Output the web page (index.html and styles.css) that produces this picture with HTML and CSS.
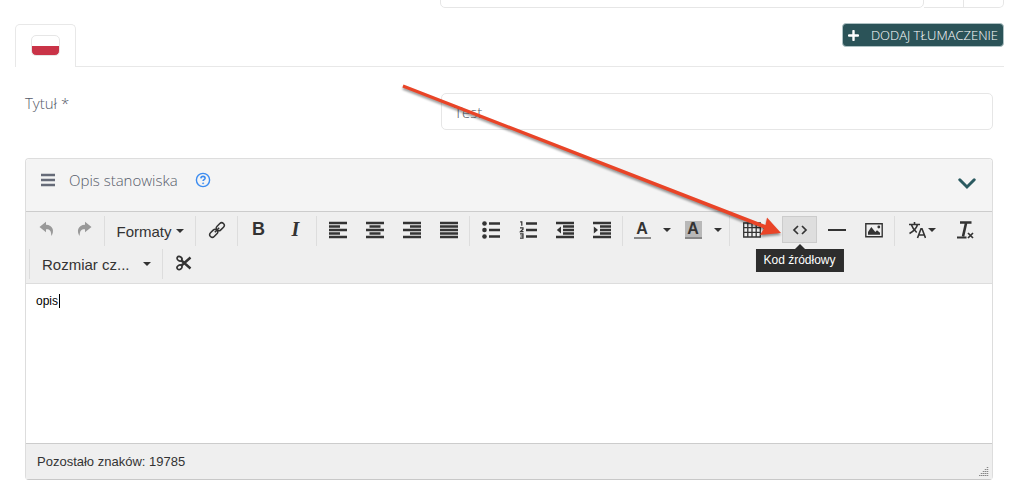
FILE: index.html
```
<!DOCTYPE html>
<html lang="pl">
<head>
<meta charset="UTF-8">
<meta name="viewport" content="width=device-width, initial-scale=1.0">
<title>Opis stanowiska</title>
<link rel="stylesheet" href="styles.css">
</head>
<body>

<div class="page">
    <!-- End of the previous field -->
    <div class="prev-row">
        <div class="prev-group"><div class="prev-main"></div><div class="prev-addon"></div><div class="prev-addon"></div></div>
    </div>

    <!-- Language tabs -->
    <div class="tabs">
        <a class="tab" href="#" aria-label="Polski"><span class="flag"></span></a>
        <div class="tabs-rest">
            <button class="add-btn" type="button">
                <svg width="11" height="11" viewBox="0 0 11 11"><path d="M5.5 1v9M1 5.5h9" stroke="#fff" stroke-width="2.4" stroke-linecap="round"/></svg>
                DODAJ TŁUMACZENIE
            </button>
        </div>
    </div>

    <div class="form">
        <div class="form-row">
            <label for="title">Tytuł *</label>
            <input id="title" class="text-input" type="text" value="Test">
        </div>

        <div class="panel">
            <div class="panel-header">
                <svg width="14" height="14" viewBox="0 0 14 14"><path d="M0 2h14M0 7h14M0 12h14" stroke="#666b78" stroke-width="2.400"/></svg>
                <label class="panel-title" for="desc">Opis stanowiska</label>
                <svg width="16" height="16" viewBox="0 0 16 16" fill="none" stroke="#3c8cf0"><circle cx="8" cy="8" r="6.6" stroke-width="1.4"/><path d="M5.9 6.4C6 5 7 4.4 8 4.4c1.200 0 2.100.7 2.100 1.800 0 1.500-2 1.500-2 2.900" stroke-width="1.6"/><circle cx="8.100" cy="11.300" r=".6" fill="#3c8cf0" stroke-width=".6"/></svg>
                <button class="collapse" type="button" aria-label="Zwiń">
                    <svg width="18" height="12" viewBox="0 0 18 12"><path d="M1.800 1.800L9 9l7.200-7.200" fill="none" stroke="#2b5a60" stroke-width="3" stroke-linecap="round"/></svg>
                </button>
            </div>

            <div class="toolbar">
                <div class="group">
                    <button class="tool disabled" type="button" aria-label="Cofnij"><svg width="18" height="18" viewBox="0 0 18 18"><path d="M8 .8L1.500 6 8 11.200V8.300c3.500-.2 5.300 1.200 5.300 6.700 3.500-5 1.700-11-5.300-11.300z" fill="currentColor"/></svg></button>
                    <button class="tool disabled" type="button" aria-label="Ponów"><svg width="18" height="18" viewBox="0 0 18 18"><path d="M10 .8L16.500 6 10 11.200V8.300c-3.500-.2-5.300 1.200-5.300 6.700C1.200 10 3 4 10 3.700z" fill="currentColor"/></svg></button>
                </div>
                <div class="group">
                    <button class="tool menu" type="button">Formaty <svg width="8" height="4" viewBox="0 0 8 4"><path d="M0 0h8L4 4z" fill="currentColor"/></svg></button>
                </div>
                <div class="group">
                    <button class="tool" type="button" aria-label="Link"><svg width="18" height="18" viewBox="0 0 18 18" fill="none" stroke="currentColor" stroke-width="1.500"><rect x="-4.500" y="-2.600" width="9" height="5.200" rx="2.600" transform="translate(12.300 5.700) rotate(-45)"/><rect x="-4.500" y="-2.600" width="9" height="5.200" rx="2.600" transform="translate(5.700 12.300) rotate(-45)"/><path d="M6.800 11.200l4.400-4.400"/></svg></button>
                </div>
                <div class="group">
                    <button class="tool bold" type="button" aria-label="Pogrubienie">B</button>
                    <button class="tool italic" type="button" aria-label="Kursywa">I</button>
                </div>
                <div class="group">
                    <button class="tool" type="button" aria-label="Do lewej"><svg width="18" height="18" viewBox="0 0 18 18" stroke="currentColor" stroke-width="2.400"><path d="M0 2h18M0 5.500h11M0 9h18M0 12.500h11M0 16h18"/></svg></button>
                    <button class="tool" type="button" aria-label="Do środka"><svg width="18" height="18" viewBox="0 0 18 18" stroke="currentColor" stroke-width="2.400"><path d="M0 2h18M3.500 5.500h11M0 9h18M3.500 12.500h11M0 16h18"/></svg></button>
                    <button class="tool" type="button" aria-label="Do prawej"><svg width="18" height="18" viewBox="0 0 18 18" stroke="currentColor" stroke-width="2.400"><path d="M0 2h18M7 5.500h11M0 9h18M7 12.500h11M0 16h18"/></svg></button>
                    <button class="tool" type="button" aria-label="Wyjustuj"><svg width="18" height="18" viewBox="0 0 18 18" stroke="currentColor" stroke-width="2.400"><path d="M0 2h18M0 5.500h18M0 9h18M0 12.500h18M0 16h18"/></svg></button>
                </div>
                <div class="group">
                    <button class="tool" type="button" aria-label="Lista punktowana"><svg width="18" height="18" viewBox="0 0 18 18"><path d="M7 2.500h11M7 9h11M7 15.500h11" stroke="currentColor" stroke-width="2.400"/><g fill="currentColor"><circle cx="2.500" cy="2.500" r="2.300"/><circle cx="2.500" cy="9" r="2.300"/><circle cx="2.500" cy="15.500" r="2.300"/></g></svg></button>
                    <button class="tool" type="button" aria-label="Lista numerowana"><svg width="18" height="18" viewBox="0 0 18 18" fill="none" stroke="currentColor"><path d="M7 2.500h11M7 9h11M7 15.500h11" stroke-width="2.400"/><path d="M1.200.8h1.600v4M1 6.800h3v1.400l-2.500 2.500H4.500M1 12.800h3v4.400H1M1.500 15H4" stroke-width="1.200"/></svg></button>
                    <button class="tool" type="button" aria-label="Zmniejsz wcięcie"><svg width="18" height="18" viewBox="0 0 18 18"><path d="M0 2h18M7 5.500h11M7 9h11M7 12.500h11M0 16h18" stroke="currentColor" stroke-width="2.400"/><path d="M5 5.500v7L.8 9z" fill="currentColor"/></svg></button>
                    <button class="tool" type="button" aria-label="Zwiększ wcięcie"><svg width="18" height="18" viewBox="0 0 18 18"><path d="M0 2h18M7 5.500h11M7 9h11M7 12.500h11M0 16h18" stroke="currentColor" stroke-width="2.400"/><path d="M.8 5.500v7L5 9z" fill="currentColor"/></svg></button>
                </div>
                <div class="group">
                    <button class="tool split" type="button" aria-label="Kolor tekstu"><span class="letter">A</span><svg width="8" height="4" viewBox="0 0 8 4"><path d="M0 0h8L4 4z" fill="currentColor"/></svg></button>
                    <button class="tool split" type="button" aria-label="Kolor tła"><span class="letter filled">A</span><svg width="8" height="4" viewBox="0 0 8 4"><path d="M0 0h8L4 4z" fill="currentColor"/></svg></button>
                </div>
                <div class="group">
                    <button class="tool pair" type="button" aria-label="Tabela"><svg width="18" height="18" viewBox="0 0 18 18" fill="none" stroke="currentColor" stroke-width="1.300"><path d="M.7 2h16.600v14H.7zM.7 6.700h16.600M.7 11.300h16.600M4.800 2v14M9 2v14M13.200 2v14"/></svg><svg width="8" height="4" viewBox="0 0 8 4"><path d="M0 0h8L4 4z" fill="currentColor"/></svg></button>
                    <div class="tip-anchor">
                        <button class="tool active" type="button" aria-label="Kod źródłowy"><svg width="18" height="18" viewBox="0 0 18 18"><path d="M7 5L3 9l4 4M11 5l4 4-4 4" fill="none" stroke="currentColor" stroke-width="1.700"/></svg></button>
                        <div class="tooltip">Kod źródłowy</div>
                    </div>
                    <button class="tool" type="button" aria-label="Linia pozioma"><svg width="18" height="18" viewBox="0 0 18 18"><path d="M0 9h18" stroke="currentColor" stroke-width="2"/></svg></button>
                    <button class="tool" type="button" aria-label="Obraz"><svg width="18" height="18" viewBox="0 0 18 18"><path d="M.8 2.800h16.400v12.900H.8z" fill="none" stroke="currentColor" stroke-width="1.400"/><path d="M3 13.800V11l3.300-5 4 5 1.700-1.800 3 2.600v2z" fill="currentColor"/><circle cx="13.800" cy="6" r="1.400" fill="currentColor"/></svg></button>
                </div>
                <div class="group">
                    <button class="tool pair" type="button" aria-label="Język"><svg width="18" height="18" viewBox="0 0 18 18" fill="none" stroke="currentColor" stroke-width="1.600"><path d="M1 3.500h11M6.500 1v2.500M1.500 12.500C6 10 8.500 7.500 9.500 3.500M3.500 4c1 3 2.500 5 5.200 7.500"/><path d="M9.500 17L13 7.800h1L17.500 17M10.800 14h5.400"/></svg><svg width="8" height="4" viewBox="0 0 8 4"><path d="M0 0h8L4 4z" fill="currentColor"/></svg></button>
                    <button class="tool" type="button" aria-label="Wyczyść formatowanie"><svg width="18" height="18" viewBox="0 0 18 18" fill="none" stroke="currentColor"><path d="M4 1.500h11.500M10.200 1.500L7 15.500" stroke-width="2.600"/><path d="M1 16.500H10.500" stroke-width="2"/><path d="M12 12l5 5M17 12l-5 5" stroke-width="1.700"/></svg></button>
                </div>
                <div class="group">
                    <div class="select-wrap">
                        <select class="size" aria-label="Rozmiar czcionki"><option>Rozmiar cz...</option></select>
                        <svg width="8" height="4" viewBox="0 0 8 4"><path d="M0 0h8L4 4z" fill="currentColor"/></svg>
                    </div>
                </div>
                <div class="group">
                    <button class="tool" type="button" aria-label="Wytnij"><svg width="18" height="18" viewBox="0 0 18 18" fill="none" stroke="currentColor"><ellipse cx="4.500" cy="4.700" rx="2.600" ry="2.100" stroke-width="1.700" transform="rotate(35 4.500 4.700)"/><ellipse cx="4.500" cy="13.300" rx="2.600" ry="2.100" stroke-width="1.700" transform="rotate(-35 4.500 13.300)"/><path d="M6.500 6.500l9 8M6.500 11.500l9-8" stroke-width="2.400"/></svg></button>
                </div>
            </div>

            <div class="editor">
                <textarea id="desc">opis</textarea>
                <span class="cursor"></span>
            </div>

            <div class="status">
                <span>Pozostało znaków: 19785</span>
                <svg class="grip" width="10" height="10" viewBox="0 0 10 10" fill="none" stroke="#888" stroke-dasharray="1 1"><path d="M.5 10V8M2.500 10V7M4.500 10V5M6.500 10V3M8.500 10V0" stroke-width="1.500"/></svg>
            </div>
        </div>
    </div>

    <!-- Arrow pointing at the source code button -->
    <svg class="arrow" width="390" height="160" viewBox="0 0 390 160">
        <path d="M7.500 4.600L6.400 7.500 368 148.500l-4 6.500 21-2-14-15.500-1.500 7.500z" fill="#e94427"/>
    </svg>
</div>

</body>
</html>
```
FILE: styles.css
```
body {
margin: 0;
background-color: #fff;
font-family: "Open Sans", sans-serif;
font-size: 15px;
font-weight: 300;
color: #555a68;
}

button,
input,
select,
textarea {
font: inherit;
color: inherit;
margin: 0;
box-sizing: border-box;
}

.page {
position: relative;
padding: 0 20px 11px 15px;
}

/* Previous field, only its lower edge is on screen */
.prev-row {
height: 8px;
overflow: hidden;
display: flex;
justify-content: flex-end;
align-items: flex-end;
}

.prev-group {
display: flex;
width: 57%;
height: 36px;
}

.prev-main,
.prev-addon {
box-sizing: border-box;
border: 1px solid #e6e6e6;
}

.prev-main {
flex: 1;
border-radius: 5px;
}

.prev-addon {
width: 40px;
border-left: 0;
}

.prev-addon:last-child {
border-radius: 0 5px 5px 0;
}

/* Tabs */
.tabs {
display: flex;
margin-top: 15px;
}

.tab {
box-sizing: border-box;
width: 61px;
height: 43px;
margin-top: 1px;
padding: 10px 15px;
border: 1px solid #e8e8e8;
border-bottom: 0;
border-radius: 5px 5px 0 0;
}

.flag {
display: block;
box-sizing: border-box;
height: 21px;
border: 1px solid #e6e6e6;
border-radius: 5px;
background: linear-gradient(#fff 50%, #c93347 50%);
}

.tabs-rest {
flex: 1;
display: flex;
justify-content: flex-end;
align-items: flex-start;
border-bottom: 1px solid #e8e8e8;
}

.add-btn {
display: flex;
align-items: center;
gap: 12px;
height: 24px;
padding: 0 5px;
border: 1px solid #afc2c4;
border-radius: 4px;
background-color: #2b5358;
color: #fff;
font-size: 13px;
white-space: nowrap;
}

/* Form */
.form {
padding: 26px 11px 0 10px;
}

.form-row {
display: flex;
justify-content: space-between;
}

.form-row label {
line-height: 20px;
}

.text-input {
width: 57%;
height: 37px;
padding: 0 12px;
border: 1px solid #e6e6e6;
border-radius: 5px;
background-color: #fff;
}

.panel {
margin-top: 28px;
border: 1px solid #ddd;
border-bottom-color: #c8c8c8;
border-radius: 4px;
}

.panel-header {
display: flex;
align-items: center;
height: 42px;
padding: 0 16px 10px 15px;
background-color: #f4f4f4;
border-radius: 4px 4px 0 0;
}

.panel-title {
margin: 0 17px 0 14px;
}

.collapse {
margin: 8px 0 0 auto;
padding: 0;
border: 0;
background: none;
line-height: 0;
}

/* Toolbar */
.toolbar {
display: flex;
flex-wrap: wrap;
row-gap: 3px;
padding: 4px 3px;
border-top: 1px solid #ccc;
border-bottom: 1px solid #ddd;
background-color: #efefef;
color: #333;
font-family: "Liberation Sans", sans-serif;
font-size: 15px;
font-weight: 400;
}

.group {
display: flex;
align-items: flex-start;
gap: 2px;
padding: 0 3px;
border-left: 1px solid #ddd;
}

.group:first-child {
padding-left: 0;
border-left: 0;
}

.tool {
display: flex;
align-items: center;
justify-content: center;
width: 35px;
height: 27px;
padding: 0;
border: 1px solid transparent;
background: none;
}

.disabled {
color: #999;
}

.menu {
width: 84px;
height: 30px;
gap: 4px;
}

.bold {
font-size: 18px;
font-weight: 700;
}

.italic {
font-family: "Liberation Serif", serif;
font-size: 20px;
font-style: italic;
font-weight: 700;
}

.split {
width: 49px;
padding-left: 3px;
gap: 12px;
}

.pair {
width: 47px;
gap: 2px;
}

.letter {
width: 17px;
height: 16px;
border-bottom: 2px solid #888;
font-size: 16px;
font-weight: 700;
line-height: 16px;
}

.filled {
background-color: #b8b8b8;
}

.active {
border-color: #ccc;
background-color: #dedede;
}

.select-wrap {
display: flex;
align-items: center;
width: 126px;
height: 30px;
}

.size {
width: 110px;
height: 30px;
padding: 0 9px;
border: 0;
background: none;
appearance: none;
}

.tip-anchor {
position: relative;
}

.tooltip {
position: absolute;
top: 33px;
left: 50%;
transform: translateX(-50%);
padding: 0 8px;
background-color: #2d2d2d;
color: #fff;
font-size: 12px;
line-height: 23px;
white-space: nowrap;
}

.tooltip::before {
content: "";
position: absolute;
top: -5px;
left: 50%;
margin-left: -5px;
border: 5px solid transparent;
border-top: 0;
border-bottom-color: #2d2d2d;
}

/* Editor */
.editor {
position: relative;
font-family: "Liberation Sans", sans-serif;
font-size: 12px;
font-weight: 400;
color: #000;
}

.editor textarea {
display: block;
width: 100%;
height: 159px;
padding: 9px 10px;
border: 0;
outline: 0;
resize: none;
line-height: 16px;
}

.cursor {
position: absolute;
top: 10px;
left: 33px;
width: 1px;
height: 14px;
background-color: #000;
}

.status {
display: flex;
justify-content: space-between;
height: 35px;
padding: 0 3px 0 11px;
border-top: 1px solid #ccc;
background-color: #efefef;
color: #333;
font-family: "Liberation Sans", sans-serif;
font-size: 13px;
font-weight: 400;
line-height: 35px;
}

.grip {
align-self: flex-end;
margin-bottom: 3px;
}

.arrow {
position: absolute;
top: 80px;
left: 396px;
pointer-events: none;
filter: drop-shadow(0 2px 1px rgba(0, 0, 0, 0.4));
}
```
